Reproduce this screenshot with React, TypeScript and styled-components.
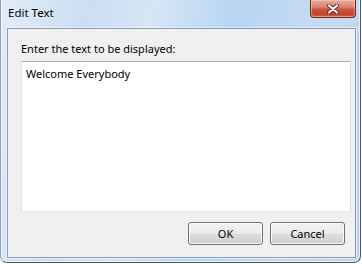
import React from 'react';
import styled, { createGlobalStyle } from 'styled-components';

const GlobalStyle = createGlobalStyle`
  html, body {
    margin: 0;
    padding: 0;
    background: #ffffff;
    overflow: hidden;
  }
  * { box-sizing: border-box; }
`;

const uiFont = `"Segoe UI", "Noto Sans", "Open Sans", sans-serif`;

const Window = styled.div`
  width: 361px;
  height: 263px;
  display: flex;
  flex-direction: column;
  border-left: 1px solid #8d9fb5;
  border-right: 1px solid #4a5c72;
  border-bottom: 1px solid #4a5c72;
  border-radius: 0 0 7px 7px;
  background: linear-gradient(100deg, #e2ecf7 0%, #cbdef2 22%, #d6e6f6 38%, #b8d5f3 58%, #c6dbf1 80%, #bed4ec 100%);
  box-shadow: inset 1px 0 0 rgba(255, 255, 255, 0.7), inset -1px -1px 0 rgba(255, 255, 255, 0.6);
  font-family: ${uiFont};
`;

const TitleBar = styled.div`
  height: 28px;
  flex: none;
  display: flex;
  justify-content: space-between;
  align-items: flex-start;
  padding-left: 7px;
`;

const Title = styled.div`
  margin-top: 5px;
  font-size: 11.5px;
  line-height: 16px;
  color: #000000;
`;

const CloseButton = styled.div`
  width: 46px;
  height: 18px;
  margin-right: 4px;
  display: flex;
  align-items: center;
  justify-content: center;
  border: 1px solid #6b2a20;
  border-top: none;
  border-radius: 0 0 4px 4px;
  background: linear-gradient(#eaa999 0%, #dc8672 40%, #c9553e 55%, #c0432d 85%, #d36a55 100%);
  box-shadow: inset 0 0 0 1px rgba(255, 220, 210, 0.45);
`;

const Client = styled.div`
  flex: 1;
  margin: 0 4px 4px 6px;
  display: flex;
  flex-direction: column;
  padding: 12px 4px 0 13px;
  background: #f0f0f0;
  border: 1px solid #8b9db3;
  box-shadow: 0 0 0 1px rgba(255, 255, 255, 0.5);
`;

const Label = styled.div`
  font-size: 11px;
  line-height: 15px;
  color: #000000;
`;

const TextBox = styled.textarea`
  margin-top: 5px;
  width: 330px;
  height: 151px;
  padding: 4px 4px;
  resize: none;
  outline: none;
  font-family: ${uiFont};
  font-size: 11px;
  line-height: 15px;
  color: #000000;
  background: #ffffff;
  border: 1px solid;
  border-color: #abadb3 #dbdfe6 #e3e9ef #e2e3ea;
`;

const ButtonRow = styled.div`
  margin-top: 10px;
  padding-right: 6px;
  display: flex;
  justify-content: flex-end;
  gap: 7px;
`;

const Button = styled.button`
  width: 75px;
  height: 23px;
  padding: 0;
  font-family: ${uiFont};
  font-size: 11px;
  color: #000000;
  border: 1px solid #707070;
  border-radius: 3px;
  background: linear-gradient(#f2f2f2 0%, #ebebeb 50%, #dddddd 50%, #cfcfcf 100%);
  box-shadow: inset 0 0 0 1px #fcfcfc;
`;

function CloseGlyph() {
  return (
    <svg width="12" height="10" viewBox="0 0 12 10">
      <path d="M2 1.5 L10 8.5 M10 1.5 L2 8.5" stroke="#5a2a22" strokeWidth="4" strokeLinecap="round" />
      <path d="M2 1.5 L10 8.5 M10 1.5 L2 8.5" stroke="#ffffff" strokeWidth="2.2" strokeLinecap="round" />
    </svg>
  );
}

export default function App() {
  return (
    <>
      <GlobalStyle />
      <Window>
        <TitleBar>
          <Title>Edit Text</Title>
          <CloseButton>
            <CloseGlyph />
          </CloseButton>
        </TitleBar>
        <Client>
          <Label>Enter the text to be displayed:</Label>
          <TextBox defaultValue="Welcome Everybody" spellCheck={false} />
          <ButtonRow>
            <Button>OK</Button>
            <Button>Cancel</Button>
          </ButtonRow>
        </Client>
      </Window>
    </>
  );
}
